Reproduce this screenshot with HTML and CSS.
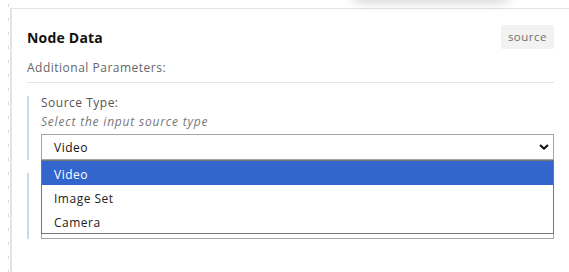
FILE: index.html
```html
<!DOCTYPE html>
<html lang="en">
<head>
    <meta charset="UTF-8">
    <meta name="viewport" content="width=device-width, initial-scale=1.0">
    <title>Node Data</title>
    <link rel="stylesheet" href="styles.css">
</head>
<body>
    <div class="node-card"></div>

    <div class="panel">
        <div class="panel-header">
            <h2>Node Data</h2>
            <span class="badge">source</span>
        </div>

        <div class="section-title">Additional Parameters:</div>

        <div class="param">
            <label class="param-label" for="sourceType">Source Type:</label>
            <div class="param-desc">Select the input source type</div>
            <div class="select-wrap">
                <div class="select" id="sourceType">
                    <span>Video</span>
                    <svg class="chevron" width="10" height="6" viewBox="0 0 10 6">
                        <path d="M1 1 L5 4.6 L9 1" fill="none" stroke="#111" stroke-width="2"/>
                    </svg>
                </div>
                <ul class="dropdown">
                    <li class="selected">Video</li>
                    <li>Image Set</li>
                    <li>Camera</li>
                </ul>
            </div>
        </div>

        <!-- second parameter, mostly hidden under the open list -->
        <div class="param param-covered">
            <div class="select-wrap">
                <div class="select"></div>
            </div>
        </div>
    </div>
</body>
</html>
```

FILE: styles.css
```css
:root {
    --text-dark: #1a1a1a;
    --text-muted: #666666;
    --line: #e4e4e4;
    --accent-bar: #cad8ea;
    --highlight: #3366cc;
}

body {
    margin: 0;
    height: 272px;
    font-family: "Open Sans", "Liberation Sans", sans-serif;
    letter-spacing: 0.5px;
    color: var(--text-dark);
    background: repeating-linear-gradient(to bottom, #d9d9d9 0 3px, transparent 3px 14px) 8px 4px / 1px 100% no-repeat;
    overflow: hidden;
}

.node-card {
    position: absolute;
    left: 352px;
    top: -40px;
    width: 158px;
    height: 40px;
    background: #fff;
    border-radius: 8px;
    box-shadow: 0 2px 12px rgba(0, 0, 0, 0.18);
}

.panel {
    box-sizing: border-box;
    height: 264px;
    margin: 8px 0 0 10px;
    padding: 16px 15px 0 15px;
    border-top: 1px solid var(--line);
    border-left: 2px solid var(--line);
    background: #fff;
}

.panel-header {
    display: flex;
    justify-content: space-between;
    align-items: center;
    height: 24px;
}

.panel-header h2 {
    margin: 0;
    font-size: 14px;
    font-weight: 700;
    letter-spacing: 0.2px;
    color: #111;
}

.badge {
    background: #f2f2f2;
    color: #707070;
    font-size: 11.5px;
    line-height: 24px;
    padding: 0 7px;
    border-radius: 2px;
}

.section-title {
    margin-top: 10px;
    padding-bottom: 5px;
    border-bottom: 1px solid var(--line);
    font-size: 12px;
    line-height: 18px;
    color: var(--text-muted);
}

.param {
    margin-top: 14px;
    padding-left: 12px;
    border-left: 2px solid var(--accent-bar);
}

.param + .param {
    margin-top: 13px;
}

.param-covered {
    padding-top: 40px;
}

.param-label {
    display: block;
    margin-top: -1px;
    font-size: 12px;
    line-height: 14px;
    color: #555;
}

.param-desc {
    margin-top: 5px;
    font-size: 12px;
    line-height: 14px;
    font-style: italic;
    letter-spacing: 0.8px;
    color: #777;
}

.select-wrap {
    position: relative;
    margin-top: 5px;
}

.param-covered .select-wrap {
    margin-top: 0;
}

.select {
    display: flex;
    justify-content: space-between;
    align-items: center;
    height: 24px;
    padding: 0 4px 0 12px;
    border: 1px solid #a5a5a5;
    font-size: 12px;
    color: #111;
}

.dropdown {
    position: absolute;
    top: 100%;
    left: 0;
    right: 0;
    margin: 0;
    padding: 0;
    list-style: none;
    background: #fff;
    border: 1px solid #767676;
    z-index: 2;
}

.dropdown li {
    height: 22px;
    padding: 2px 0 0 12px;
    line-height: 24px;
    font-size: 12px;
    color: #222;
}

.dropdown li.selected {
    background: var(--highlight);
    color: #fff;
}
```
